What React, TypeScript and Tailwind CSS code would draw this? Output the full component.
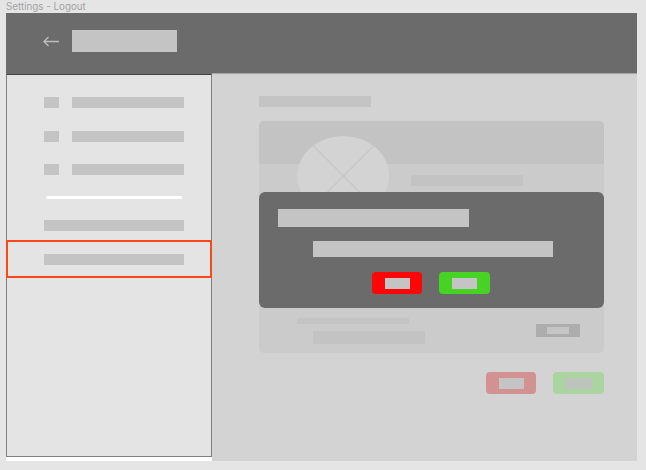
function NavItem() {
  return (
    <div className="flex h-[11px] gap-[13px]">
      <div className="w-[15px] bg-[#c4c4c4]" />
      <div className="w-[112px] bg-[#c4c4c4]" />
    </div>
  );
}

function Header() {
  return (
    <header className="flex h-[61px] items-start bg-[#6b6b6b] pl-[37px] pt-[17px]">
      <svg className="mt-[5px] h-3 w-4" viewBox="0 0 16 12" fill="none" stroke="#bcbcbc" strokeWidth="1.4">
        <path d="M16 6.5H1M5.5 2L1 6.5L5.5 11" />
      </svg>
      <div className="ml-[13px] h-[22px] w-[105px] bg-[#c4c4c4]" />
    </header>
  );
}

function Sidebar() {
  return (
    <aside className="h-[387px] w-[206px] bg-white">
      <div className="h-[383px] border border-[#808080] border-t-[#444444] bg-[#e4e4e4] pt-[22px]">
        <nav className="flex flex-col gap-[22.5px] pl-[37px]">
          <NavItem />
          <NavItem />
          <NavItem />
        </nav>
        <div className="ml-[38.5px] mt-[21px] h-[3px] w-[136px] rounded-full bg-white" />
        <div className="ml-[37px] mt-[21px] h-[11px] w-[140px] bg-[#c4c4c4]" />
        <div className="-ml-px mt-[9px] flex h-[38px] w-[205.5px] items-center border-2 border-[#f9481c] pl-9">
          <div className="h-[11px] w-[140px] bg-[#c4c4c4]" />
        </div>
      </div>
    </aside>
  );
}

function ProfileCard() {
  return (
    <section className="flex h-[232px] flex-col overflow-hidden rounded-[5px] bg-[#cbcbcb]">
      <div className="h-[43px] bg-[#c3c3c3] pl-[38px] pt-[15px]">
        <svg className="h-20 w-[93px]" viewBox="0 0 93 80" fill="none">
          <ellipse cx="46.2" cy="40" rx="46" ry="40" fill="#d3d3d3" />
          <path d="M15.5 9L77.5 71M77.5 9L15.5 71" stroke="#c6c6c6" strokeWidth="1.2" />
        </svg>
      </div>
      <div className="ml-[152px] mt-[11px] h-[11px] w-[112px] bg-[#c3c3c3]" />
      <div className="mt-auto flex h-[35px] items-start pl-[38px]">
        <div>
          <div className="h-[6px] w-[112px] bg-[#c4c4c4]" />
          <div className="ml-4 mt-[7px] h-[13px] w-[112px] bg-[#c3c3c3]" />
        </div>
        <div className="ml-[111px] mt-[6px] flex h-[13px] w-11 items-center justify-center bg-[#adadad]">
          <div className="h-[7px] w-[22px] bg-[#c5c5c5]" />
        </div>
      </div>
    </section>
  );
}

function LogoutDialog() {
  return (
    <div role="dialog" className="absolute left-0 top-[71px] h-[116px] w-[345px] rounded-[6px] bg-[#6b6b6b] pt-[17px]">
      <div className="ml-[19px] h-[18px] w-[191px] bg-[#c4c4c4]" />
      <div className="ml-[54px] mt-[14px] h-[16px] w-[240px] bg-[#c4c4c4]" />
      <div className="mt-[15px] flex gap-[17px] pl-[113px]">
        <button aria-label="Cancel" className="flex h-[22px] w-[50px] items-center justify-center rounded bg-[#ff0505]">
          <span className="h-[11px] w-[25px] bg-[#c4c4c4]" />
        </button>
        <button aria-label="Confirm" className="flex h-[22px] w-[51px] items-center justify-center rounded bg-[#46d323]">
          <span className="h-[11px] w-[25px] bg-[#c4c4c4]" />
        </button>
      </div>
    </div>
  );
}

export default function App() {
  return (
    <div className="h-[470px] w-[646px] overflow-hidden bg-[#e5e5e5] pl-[6px]">
      <div className="h-[13px] whitespace-nowrap font-['Inter',sans-serif] text-[9.8px] leading-[13px] text-[#a3a3a3]">
        Settings - Logout
      </div>
      <div className="w-[631px]">
        <Header />
        <div className="flex">
          <Sidebar />
          <main className="-mt-px h-[388px] w-[425px] border-t border-[#a6a6a6] bg-[#d3d3d3] pl-[47px] pr-[33px] pt-[22px] shadow-[inset_0_1px_0_#cdcdcd]">
            <div className="h-[11px] w-[112px] bg-[#c4c4c4]" />
            <div className="relative mt-[14px]">
              <ProfileCard />
              <LogoutDialog />
            </div>
            <div className="mt-[19px] flex justify-end gap-[17px]">
              <div className="flex h-[22px] w-[50px] items-center justify-center rounded bg-[#d29292]">
                <div className="h-[11px] w-[25px] bg-[#c4c4c4]" />
              </div>
              <div className="flex h-[22px] w-[51px] items-center justify-center rounded bg-[#aad5a0]">
                <div className="h-[11px] w-[27px] bg-[#bfc3bd]" />
              </div>
            </div>
          </main>
        </div>
      </div>
    </div>
  );
}
